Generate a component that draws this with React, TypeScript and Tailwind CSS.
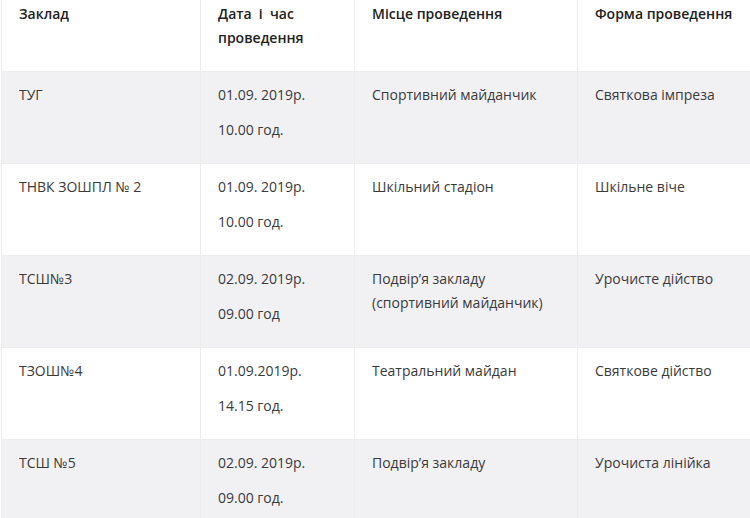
import React from 'react';

type Row = {
  school: string;
  date: string[];
  place: string;
  form: string;
};

const rows: Row[] = [
  { school: 'ТУГ', date: ['01.09. 2019р.', '10.00 год.'], place: 'Спортивний майданчик', form: 'Святкова імпреза' },
  { school: 'ТНВК ЗОШПЛ № 2', date: ['01.09. 2019р.', '10.00 год.'], place: 'Шкільний стадіон', form: 'Шкільне віче' },
  { school: 'ТСШ№3', date: ['02.09. 2019р.', '09.00 год'], place: 'Подвір’я закладу (спортивний майданчик)', form: 'Урочисте дійство' },
  { school: 'ТЗОШ№4', date: ['01.09.2019р.', '14.15 год.'], place: 'Театральний майдан', form: 'Святкове дійство' },
  { school: 'ТСШ №5', date: ['02.09. 2019р.', '09.00 год.'], place: 'Подвір’я закладу', form: 'Урочиста лінійка' },
];

const cell = 'align-top border border-[#ececec] pl-[17px] pr-3';

export default function App() {
  return (
    <div className="w-[750px] h-[518px] overflow-hidden bg-white pl-px">
      <table
        className="w-[780px] table-fixed border-collapse text-[14px] leading-6 text-[#3a3a3a]"
        style={{ fontFamily: '"Open Sans", "Noto Sans", sans-serif' }}
      >
        <colgroup>
          <col className="w-[199px]" />
          <col className="w-[154px]" />
          <col className="w-[223px]" />
          <col />
        </colgroup>
        <thead>
          <tr className="h-[71px]">
            <th className={`${cell} border-t-0 pt-[2px] pb-5 text-left font-semibold text-[#222]`}>Заклад</th>
            <th className={`${cell} border-t-0 pt-[2px] pb-5 text-left font-semibold text-[#222]`}>
              Дата&nbsp; і &nbsp;час проведення
            </th>
            <th className={`${cell} border-t-0 pt-[2px] pb-5 text-left font-semibold text-[#222]`}>Місце проведення</th>
            <th className={`${cell} border-t-0 pt-[2px] pb-5 text-left font-semibold text-[#222]`}>Форма проведення</th>
          </tr>
        </thead>
        <tbody>
          {rows.map((r, i) => (
            <tr key={i} className={`h-[92px] ${i % 2 === 0 ? 'bg-[#f1f1f4]' : 'bg-white'}`}>
              <td className={`${cell} pt-[11px]`}>{r.school}</td>
              <td className={`${cell} pt-[11px]`}>
                {r.date.map((d, j) => (
                  <p key={j} className="mb-[11px]">
                    {d}
                  </p>
                ))}
              </td>
              <td className={`${cell} pt-[11px]`}>{r.place}</td>
              <td className={`${cell} pt-[11px]`}>{r.form}</td>
            </tr>
          ))}
        </tbody>
      </table>
    </div>
  );
}
